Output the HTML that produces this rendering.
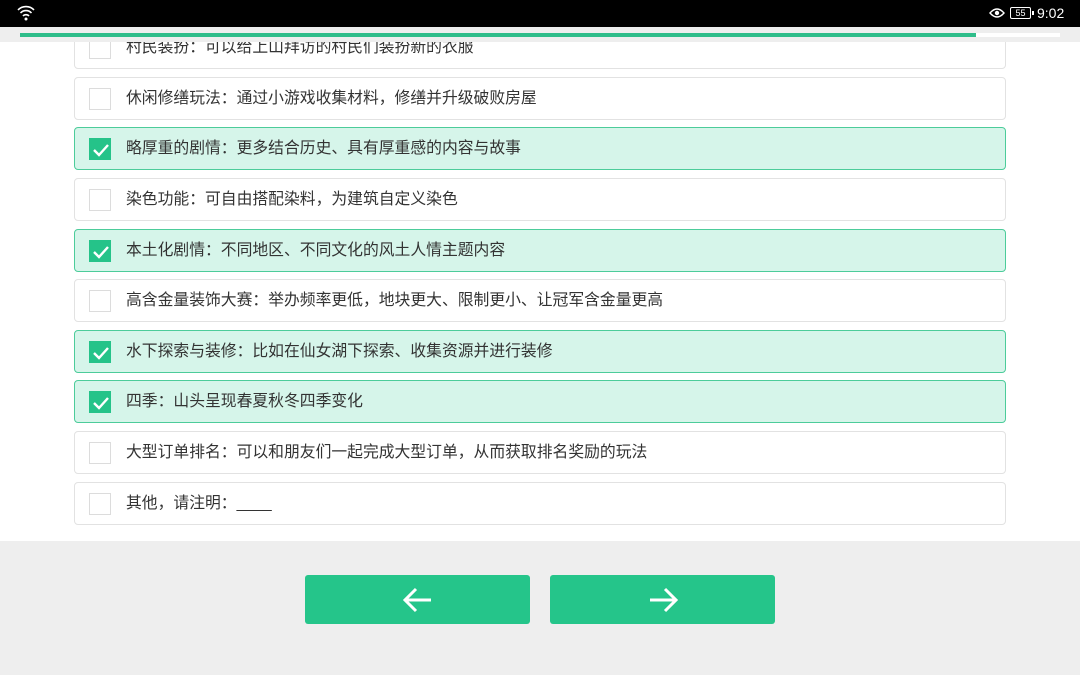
<!DOCTYPE html>
<html><head><meta charset="utf-8"><style>
*{margin:0;padding:0;box-sizing:border-box}
body{width:1080px;height:675px;overflow:hidden;background:#eeeeee;font-family:"Liberation Sans","Noto Sans CJK SC",sans-serif;position:relative}
.sb{position:absolute;left:0;top:0;width:1080px;height:27px;background:#000;color:#fff}
.prog{position:absolute;top:27px;left:0;width:1080px;height:15px;background:#eee}
.content{position:absolute;top:42px;left:0;width:1080px;height:499px;background:#fff;overflow:hidden}
.row{position:absolute;left:74px;width:932px;height:43px;border:1px solid #e2e2e2;border-radius:4px;background:#fff}
.row.on{background:#d6f5ea;border-color:#4ccc9a}
.cb{position:absolute;left:14px;top:10px;width:22px;height:22px;border:1px solid #dcdcdc;background:#fff}
.on .cb{background:#25c389;border-color:#25c389}
.t{position:absolute;left:51px;top:0;line-height:41px;font-size:15.8px;color:#333}
.btn{position:absolute;top:575px;width:225px;height:49px;background:#25c58a;border-radius:3px}
</style></head><body>
<div class="sb">
<svg style="position:absolute;left:17px;top:5px" width="18" height="16" viewBox="0 0 18 16"><path d="M1 5a11 11 0 0 1 16 0M3.5 8a7.5 7.5 0 0 1 11 0M6 11a4 4 0 0 1 6 0" stroke="#fff" stroke-width="1.6" fill="none"/><circle cx="9" cy="14" r="1.5" fill="#fff"/></svg>
<svg style="position:absolute;left:989px;top:7px" width="16" height="12" viewBox="0 0 16 12"><path d="M1 6Q8 -2 15 6Q8 14 1 6Z" stroke="#fff" stroke-width="1.4" fill="none"/><circle cx="8" cy="6" r="2.2" fill="#fff"/></svg>
<div style="position:absolute;left:1010px;top:7px;width:21px;height:12px;border:1px solid #fff;border-radius:2px;font-size:9px;line-height:10px;text-align:center">55</div>
<div style="position:absolute;left:1032px;top:11px;width:2px;height:4px;background:#fff"></div>
<div style="position:absolute;left:1037px;top:5px;font-size:14px">9:02</div>
</div>
<div class="prog"><div style="position:absolute;left:20px;top:6px;width:1040px;height:4px;background:#fff"></div><div style="position:absolute;left:20px;top:6px;width:956px;height:4px;background:#2ebd8a"></div></div>
<div class="content">
<div class="row" style="top:-16px"><div class="cb"></div><div class="t">村民装扮：可以给上山拜访的村民们装扮新的衣服</div></div>
<div class="row" style="top:35px"><div class="cb"></div><div class="t">休闲修缮玩法：通过小游戏收集材料，修缮并升级破败房屋</div></div>
<div class="row on" style="top:85px"><div class="cb"><svg width="22" height="22"><path d="M4 11l5 5 9-10" stroke="#fff" stroke-width="2.4" fill="none"/></svg></div><div class="t">略厚重的剧情：更多结合历史、具有厚重感的内容与故事</div></div>
<div class="row" style="top:136px"><div class="cb"></div><div class="t">染色功能：可自由搭配染料，为建筑自定义染色</div></div>
<div class="row on" style="top:187px"><div class="cb"><svg width="22" height="22"><path d="M4 11l5 5 9-10" stroke="#fff" stroke-width="2.4" fill="none"/></svg></div><div class="t">本土化剧情：不同地区、不同文化的风土人情主题内容</div></div>
<div class="row" style="top:237px"><div class="cb"></div><div class="t">高含金量装饰大赛：举办频率更低，地块更大、限制更小、让冠军含金量更高</div></div>
<div class="row on" style="top:288px"><div class="cb"><svg width="22" height="22"><path d="M4 11l5 5 9-10" stroke="#fff" stroke-width="2.4" fill="none"/></svg></div><div class="t">水下探索与装修：比如在仙女湖下探索、收集资源并进行装修</div></div>
<div class="row on" style="top:338px"><div class="cb"><svg width="22" height="22"><path d="M4 11l5 5 9-10" stroke="#fff" stroke-width="2.4" fill="none"/></svg></div><div class="t">四季：山头呈现春夏秋冬四季变化</div></div>
<div class="row" style="top:389px"><div class="cb"></div><div class="t">大型订单排名：可以和朋友们一起完成大型订单，从而获取排名奖励的玩法</div></div>
<div class="row" style="top:440px"><div class="cb"></div><div class="t">其他，请注明：____</div></div>
</div>
<div class="btn" style="left:305px"><svg style="position:absolute;left:96px;top:10px" width="34" height="30" viewBox="0 0 34 30"><path d="M30 15H4M15 4L4 15l11 11" stroke="#fff" stroke-width="3" fill="none"/></svg></div>
<div class="btn" style="left:550px"><svg style="position:absolute;left:96px;top:10px" width="34" height="30" viewBox="0 0 34 30"><path d="M4 15h26M19 4l11 11-11 11" stroke="#fff" stroke-width="3" fill="none"/></svg></div>
</body></html>
